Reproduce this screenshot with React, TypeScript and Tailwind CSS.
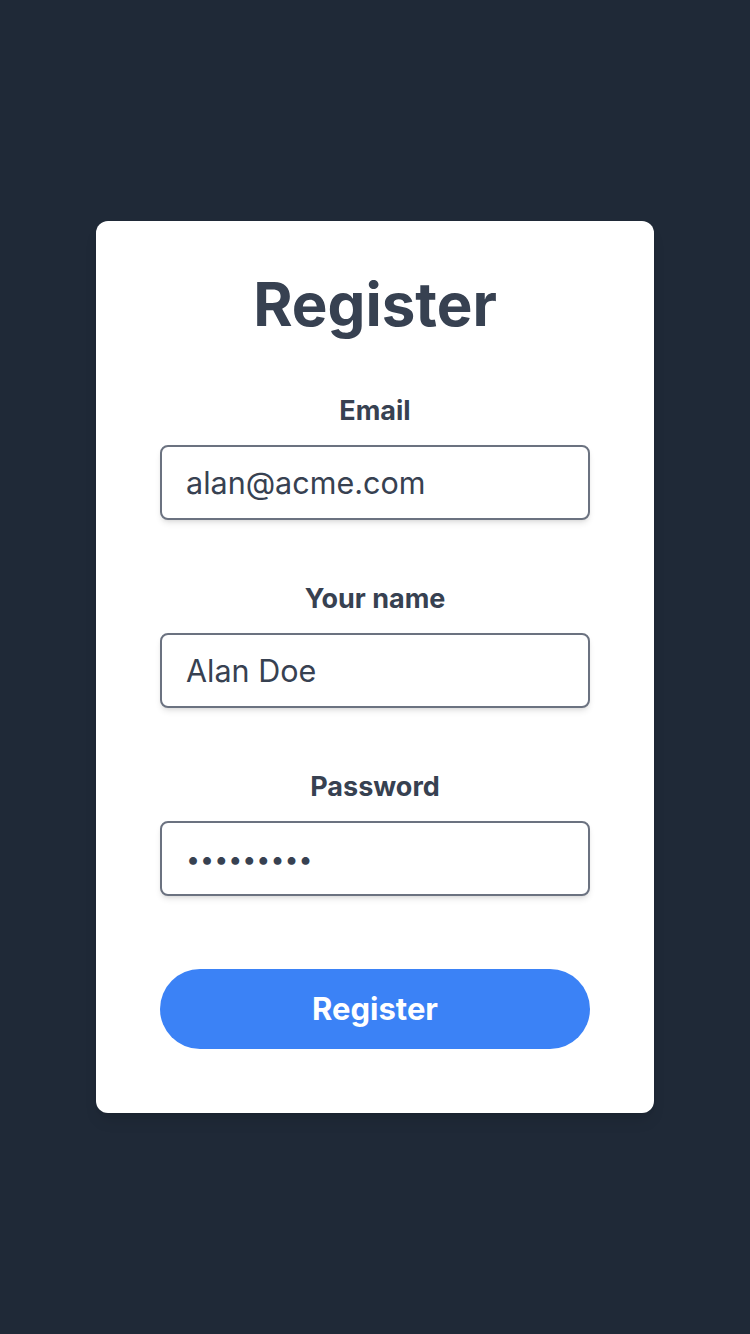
export default function App() {
  return (
    <div className="flex min-h-screen items-center justify-center bg-[#1f2937] font-['Inter',sans-serif]">
      <div className="flex w-[558px] flex-col rounded-xl bg-white px-16 pt-[47px] pb-16 shadow-lg">
        <h1 className="text-center text-[60px] leading-[72px] font-bold text-[#374151]">Register</h1>

        <form className="mt-[54px] flex flex-col gap-[62px]" onSubmit={(e) => e.preventDefault()}>
          <Field label="Email" type="text" value="alan@acme.com" />
          <Field label="Your name" type="text" value="Alan Doe" />
          <Field label="Password" type="password" value="secret123" />

          <button
            type="submit"
            className="mt-[11px] h-[80px] w-full rounded-full bg-[#3b82f6] text-[31px] font-bold text-white"
          >
            Register
          </button>
        </form>
      </div>
    </div>
  );
}

function Field({ label, type, value }: { label: string; type: string; value: string }) {
  const size = type === "password" ? "text-[25px]" : "text-[30.5px]";
  return (
    <label className="flex flex-col gap-[17px]">
      <span className="text-center text-[27px] leading-[34px] font-bold text-[#374151]">{label}</span>
      <input
        type={type}
        defaultValue={value}
        readOnly
        className={`h-[75px] w-full rounded-lg border-2 border-[#6b7280] bg-white px-6 text-[#374151] shadow-md outline-none ${size}`}
      />
    </label>
  );
}
